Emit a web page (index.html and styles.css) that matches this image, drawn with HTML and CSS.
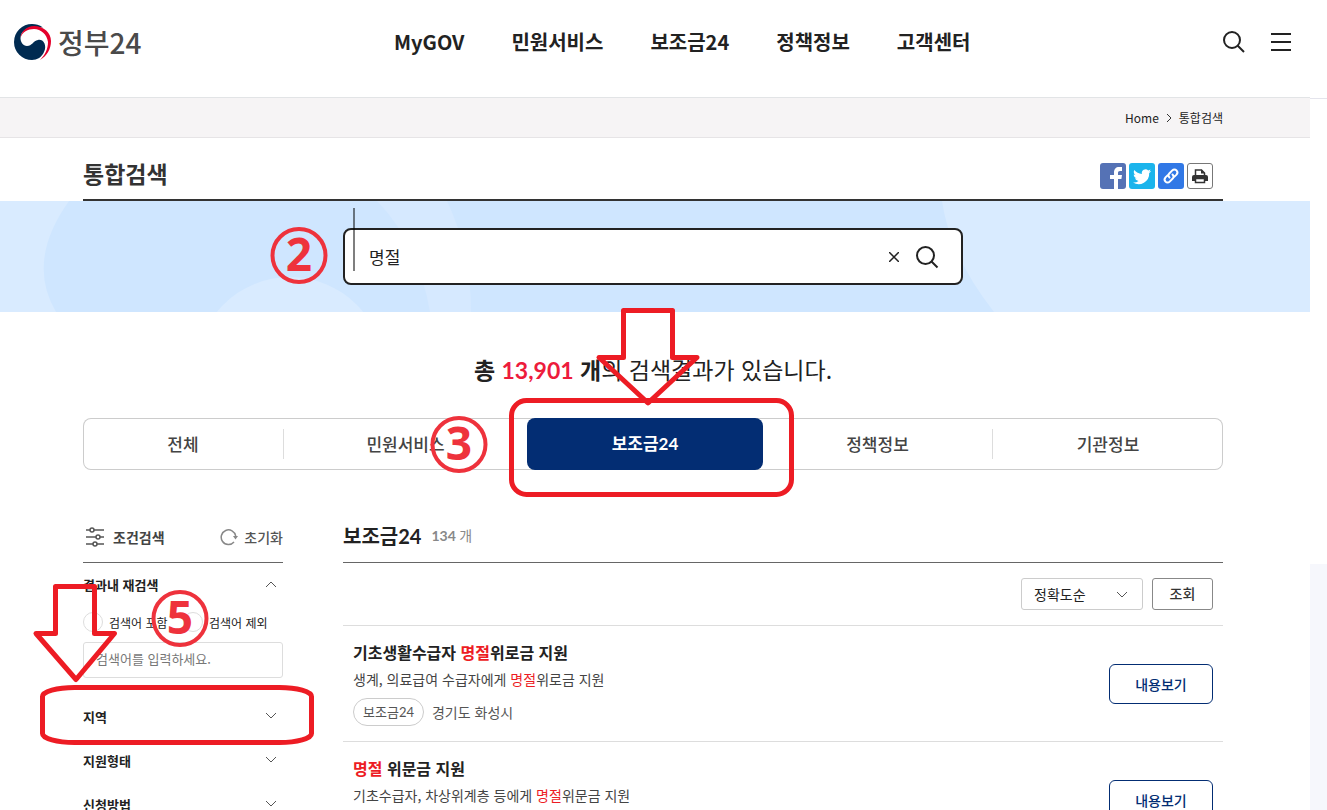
FILE: index.html
```html
<!DOCTYPE html>
<html lang="ko">

<head>
    <meta charset="UTF-8">
    <meta name="viewport" content="width=device-width, initial-scale=1.0">
    <title>통합검색 | 정부24</title>
    <link rel="stylesheet" href="styles.css">
</head>

<body>
    <header class="header">
        <a href="#" class="logo">
            <svg width="38" height="38" viewBox="0 0 38 38" aria-hidden="true">
                <path d="M29 4.500C25 1.500 22 1 18 1A18 18 0 0 0 18 37C23 37 28 34 30 29C31.500 26 31.500 23 30.500 20.500C29 17 26 16.500 24 17C19 18 18 23 13 23C9 23 6.500 19 6.500 15C7 8 13 4 20 4Z" fill="#002b51"/>
                <path d="M6.500 15C7 8 13 3.300 20 3C30 3 37 10 37 18C37 26 33 33 26 37C31 32 34 26 34 19C33 11 27 6.500 20 6C14 6 8 9 6.500 15Z" fill="#e4002b"/>
            </svg>
            <span>정부24</span>
        </a>
        <nav class="gnb">
            <a href="#">MyGOV</a>
            <a href="#">민원서비스</a>
            <a href="#">보조금24</a>
            <a href="#">정책정보</a>
            <a href="#">고객센터</a>
        </nav>
        <div class="header-tools">
            <button type="button" aria-label="검색">
                <svg width="22" height="22" viewBox="0 0 22 22" fill="none" stroke="#222" stroke-width="2"><circle cx="9" cy="9" r="8"/><path d="M14.500 14.500 21 21"/></svg>
            </button>
            <button type="button" aria-label="전체메뉴">
                <svg width="20" height="20" viewBox="0 0 20 20" stroke="#222" stroke-width="2"><path d="M0 2h20M0 10h20M0 18h20"/></svg>
            </button>
        </div>
    </header>

    <div class="layout">
        <div class="page">
            <div class="breadcrumb">
                <div class="container">
                    <a href="#">Home</a>
                    <svg width="6" height="10" viewBox="0 0 6 10" fill="none" stroke="#333"><path d="M1 1l4 4-4 4"/></svg>
                    <span>통합검색</span>
                </div>
            </div>

            <div class="container">
                <div class="title-row">
                    <h1>통합검색</h1>
                    <div class="share">
                        <a href="#" class="facebook" aria-label="페이스북">
                            <svg width="26" height="26" viewBox="0 0 26 26" fill="#fff"><path d="M14 26V16h-4v-4h4V9.500C14 6 16 4 19 4h3v4h-2c-1.500 0-2 .7-2 2v2h4l-.6 4H18v10z"/></svg>
                        </a>
                        <a href="#" class="twitter" aria-label="트위터">
                            <svg width="26" height="26" viewBox="0 0 26 26" fill="#fff"><path d="M22 8c-.6.300-1.300.5-2 .6.700-.4 1.300-1.100 1.500-2-.7.400-1.500.7-2.300.9a3.700 3.700 0 0 0-6.300 3.400C9.800 10.700 7.100 9.200 5.300 7c-1 1.700-.5 3.900 1.100 5-.6 0-1.200-.2-1.700-.5 0 1.800 1.300 3.400 3 3.700-.6.200-1.100.2-1.700.1.500 1.500 1.900 2.500 3.500 2.600A7.500 7.500 0 0 1 4 19.400a10.500 10.500 0 0 0 16.200-9.300c.7-.5 1.300-1.200 1.800-2.100z"/></svg>
                        </a>
                        <a href="#" class="link" aria-label="주소복사">
                            <svg width="26" height="26" viewBox="0 0 26 26" fill="none" stroke="#fff" stroke-width="2" stroke-linecap="round"><path d="M11.500 14.500c-1.500-1.500-1.300-3 0-4.300l2.800-2.800c1.300-1.300 3-1.300 4.200 0s1.200 2.900 0 4.200l-2.300 2.300M14.500 11.500c1.500 1.500 1.300 3 0 4.300l-2.800 2.800c-1.300 1.300-3 1.300-4.200 0s-1.200-2.900 0-4.200l2.300-2.300"/></svg>
                        </a>
                        <button type="button" class="print" aria-label="인쇄">
                            <svg width="24" height="24" viewBox="0 0 24 24"><path d="M7.500 11V6h6l3 3v2" fill="#fff" stroke="#333" stroke-width="1.500"/><path d="M13 5.500v4h4z" fill="#333"/><path d="M6 11h12a2 2 0 0 1 2 2v4H4v-4a2 2 0 0 1 2-2z" fill="#333"/><path d="M7.500 14.500h9v4h-9z" fill="#fff" stroke="#333" stroke-width="1.500"/></svg>
                        </button>
                    </div>
                </div>
            </div>

            <div class="banner">
                <svg class="banner-bg" width="1310" height="111" viewBox="0 0 1310 111" aria-hidden="true">
                    <path d="M69 0Q26 60 56 111H994Q950 55 942 0Z" fill="#cfe6ff"/>
                    <path d="M377 0Q418 42 430 111H471Q471 50 447 0Z" fill="#d6e9ff"/>
                    <circle cx="290" cy="170" r="94" fill="#d9ebff"/>
                </svg>
                <form class="search">
                    <input type="text" value="명절" aria-label="검색어">
                    <button type="reset" aria-label="지우기">
                        <svg width="10" height="10" viewBox="0 0 10 10" stroke="#222" stroke-width="1.500"><path d="M0 0l10 10M10 0L0 10"/></svg>
                    </button>
                    <button type="submit" aria-label="검색">
                        <svg width="24" height="24" viewBox="0 0 24 24" fill="none" stroke="#222" stroke-width="2"><circle cx="10.500" cy="10.500" r="8.500"/><path d="M16.500 16.500l6 6"/></svg>
                    </button>
                </form>
            </div>

            <div class="container">
                <p class="total"><strong>총 <em>13,901</em> 개</strong>의 검색결과가 있습니다.</p>

                <nav class="tabs">
                    <a href="#">전체</a>
                    <a href="#">민원서비스</a>
                    <a href="#" class="active">보조금24</a>
                    <a href="#">정책정보</a>
                    <a href="#">기관정보</a>
                </nav>

                <div class="columns">
                    <aside class="filter">
                        <div class="filter-head">
                            <svg width="20" height="20" viewBox="0 0 20 20" fill="#fff" stroke="#555" stroke-width="1.500"><path d="M1 3h18M1 10h18M1 17h18"/><circle cx="7" cy="3" r="2"/><circle cx="13" cy="10" r="2"/><circle cx="10" cy="17" r="2"/></svg>
                            <h2>조건검색</h2>
                            <button type="reset" class="reset">
                                <svg width="18" height="18" viewBox="0 0 18 18" fill="none" stroke="#888" stroke-width="1.500"><path d="M14 14A7.300 7.300 0 1 1 15.700 8"/><path d="M13 8h5l-2.500 3.500z" fill="#888" stroke="none"/></svg>
                                초기화
                            </button>
                        </div>
                        <button type="button" class="fold">결과내 재검색
                            <svg width="12" height="8" viewBox="0 0 12 8" fill="none" stroke="#555"><path d="M1 7l5-5 5 5"/></svg>
                        </button>
                        <div class="research">
                            <div class="radios">
                                <label><input type="radio" name="mode" value="in">검색어 포함</label>
                                <label><input type="radio" name="mode" value="out">검색어 제외</label>
                            </div>
                            <input type="text" placeholder="검색어를 입력하세요." aria-label="결과내 검색어">
                        </div>
                        <button type="button" class="fold">지역
                            <svg width="12" height="8" viewBox="0 0 12 8" fill="none" stroke="#555"><path d="M1 1l5 5 5-5"/></svg>
                        </button>
                        <button type="button" class="fold">지원형태
                            <svg width="12" height="8" viewBox="0 0 12 8" fill="none" stroke="#555"><path d="M1 1l5 5 5-5"/></svg>
                        </button>
                        <button type="button" class="fold">신청방법
                            <svg width="12" height="8" viewBox="0 0 12 8" fill="none" stroke="#555"><path d="M1 1l5 5 5-5"/></svg>
                        </button>
                    </aside>

                    <main class="results">
                        <div class="results-head">
                            <h2>보조금24</h2>
                            <span><b>134</b> 개</span>
                        </div>
                        <form class="sort">
                            <div class="select">
                                <select aria-label="정렬">
                                    <option>정확도순</option>
                                </select>
                                <svg width="12" height="8" viewBox="0 0 12 8" fill="none" stroke="#555"><path d="M1 1l5 5 5-5"/></svg>
                            </div>
                            <button type="submit">조회</button>
                        </form>
                        <article class="item">
                            <div class="text">
                                <h3>기초생활수급자 <mark>명절</mark>위로금 지원</h3>
                                <p>생계, 의료급여 수급자에게 <mark>명절</mark>위로금 지원</p>
                                <div class="meta"><span class="tag">보조금24</span>경기도 화성시</div>
                            </div>
                            <a href="#" class="view">내용보기</a>
                        </article>
                        <article class="item">
                            <div class="text">
                                <h3><mark>명절</mark> 위문금 지원</h3>
                                <p>기초수급자, 차상위계층 등에게 <mark>명절</mark>위문금 지원</p>
                                <div class="meta"></div>
                            </div>
                            <a href="#" class="view">내용보기</a>
                        </article>
                    </main>
                </div>
            </div>
        </div>
        <div class="gutter"><div></div></div>
    </div>

    <!-- guide marks over the page -->
    <svg class="marks" width="1327" height="810" viewBox="0 0 1327 810">
        <path d="M354 208v63" stroke="#000" stroke-opacity=".5" stroke-width="2"/>
        <g fill="none" stroke="#ed1c24" stroke-width="5" stroke-linejoin="round">
            <path d="M623.500 310.500h49v47h24.500l-49 45.500-49-45.500h24.500z"/>
            <rect x="511.500" y="400.500" width="280" height="94" rx="15"/>
            <path d="M55.500 586.500h39v47h20l-38.500 46-40-46h19.500z"/>
            <rect x="42.500" y="687.500" width="269" height="55" rx="32" ry="9"/>
        </g>
        <g class="numbers">
            <circle cx="299" cy="255.500" r="26.500"/>
            <text x="299" y="271">2</text>
            <circle cx="459" cy="444.500" r="26.500"/>
            <text x="459" y="460">3</text>
            <circle cx="180" cy="618.500" r="26.500"/>
            <text x="180" y="634">5</text>
        </g>
    </svg>
</body>

</html>
```
FILE: styles.css
```css
* {
    box-sizing: border-box;
}

body {
    position: relative;
    height: 100vh;
    margin: 0;
    overflow: hidden;
    background-color: #fff;
    color: #222;
    font-family: "Noto Sans CJK KR", sans-serif;
    font-size: 14px;
}

h1, h2, h3, p {
    margin: 0;
}

a {
    color: inherit;
    text-decoration: none;
}

svg {
    display: block;
    flex: none;
}

button {
    padding: 0;
    border: none;
    background: none;
    color: inherit;
    font: inherit;
    cursor: pointer;
}

input, select {
    font: inherit;
    color: inherit;
}

mark {
    background: none;
    color: #ed1c24;
}

.header {
    display: grid;
    grid-template-columns: 394px 1fr auto;
    align-items: center;
    height: 97px;
    padding: 0 36px 14px 0;
}

.logo {
    display: flex;
    align-items: center;
    gap: 6px;
    padding-left: 14px;
    color: #4a4a4a;
    font-size: 28px;
    font-weight: 500;
    line-height: 38px;
}

.gnb {
    display: flex;
    gap: 47px;
    font-size: 20px;
    font-weight: 700;
}

.header-tools {
    display: flex;
    align-items: center;
    gap: 26px;
}

.layout {
    display: flex;
}

.page {
    flex: 1;
}

.gutter {
    display: flex;
    flex-direction: column;
    width: 17px;
    margin-top: 1px;
    border-top: 1px solid #e4e4ec;
}

.gutter div {
    flex: 1;
    margin-top: 465px;
    background-color: #f6f7fc;
}

.container {
    width: calc(100% - 170px);
    max-width: 1140px;
    margin: 0 87px 0 83px;
}

.breadcrumb {
    border-top: 1px solid #e2e4e6;
    border-bottom: 1px solid #e6e4e6;
    background-color: #f6f4f5;
}

.breadcrumb .container {
    display: flex;
    justify-content: flex-end;
    align-items: center;
    gap: 7px;
    height: 39px;
    font-size: 12px;
}

.title-row {
    display: flex;
    justify-content: space-between;
    align-items: center;
    height: 63px;
    padding-top: 14px;
    border-bottom: 2px solid #333;
}

h1 {
    height: 47px;
    color: #333;
    font-size: 23px;
    line-height: 42px;
}

.share {
    display: flex;
    gap: 3px;
    padding-right: 10px;
}

.share a, .share button {
    width: 26px;
    height: 26px;
    border-radius: 3px;
}

.facebook {
    background-color: #5572b5;
}

.twitter {
    background-color: #1bb4ec;
}

.link {
    background-color: #3178e6;
}

.share .print {
    border: 1px solid #777;
}

.banner {
    position: relative;
    display: flex;
    height: 111px;
    padding: 27px 0 0 343px;
    overflow: hidden;
    background-color: #d9ebff;
}

.banner-bg {
    position: absolute;
    top: 0;
    left: 0;
}

.search {
    position: relative;
    display: flex;
    align-items: center;
    gap: 16px;
    width: 620px;
    height: 57px;
    padding: 0 22px 0 24px;
    border: 2px solid #222;
    border-radius: 8px;
    background-color: #fff;
}

.search input {
    flex: 1;
    min-width: 0;
    padding: 0;
    border: none;
    outline: none;
    font-size: 17px;
}

.total {
    margin-top: 39px;
    font-size: 23px;
    line-height: 36px;
    text-align: center;
}

.total em {
    color: #ed1c3c;
    font-family: Lato, "Noto Sans CJK KR", sans-serif;
    font-style: normal;
}

.tabs {
    display: grid;
    grid-template-columns: 201fr 243fr 236fr 230fr 230fr;
    align-items: center;
    margin-top: 30px;
    box-shadow: inset 0 0 0 1px #ccc;
    border-radius: 8px;
    color: #444;
    font-size: 17px;
    font-weight: 500;
    line-height: 30px;
    text-align: center;
}

.tabs a {
    border-right: 1px solid #ddd;
}

.tabs a:nth-child(2), .tabs a:last-child {
    border-right: none;
}

.tabs .active {
    border: none;
    border-radius: 8px;
    background-color: #032d73;
    color: #fff;
    font-family: Lato, "Noto Sans CJK KR", sans-serif;
    font-weight: 700;
    line-height: 52px;
}

.columns {
    display: grid;
    grid-template-columns: 200px 1fr;
    gap: 60px;
    margin-top: 42px;
}

.filter-head, .results-head {
    display: flex;
    align-items: center;
    height: 51px;
    border-bottom: 1px solid #666;
}

.filter-head {
    padding-left: 2px;
}

.filter-head h2 {
    margin-left: 8px;
    color: #444;
    font-size: 14px;
}

.reset {
    display: flex;
    align-items: center;
    gap: 6px;
    margin-left: auto;
    color: #555;
    font-weight: 500;
}

.fold {
    display: flex;
    justify-content: space-between;
    align-items: center;
    width: 100%;
    height: 44px;
    padding-right: 6px;
    padding-bottom: 2px;
    font-size: 13px;
    font-weight: 700;
}

.research {
    padding: 5px 0 17px;
}

.radios {
    display: grid;
    grid-template-columns: 1fr 1fr;
    font-size: 12px;
    white-space: nowrap;
}

.radios label {
    display: flex;
    align-items: center;
    gap: 6px;
}

.radios input {
    width: 20px;
    height: 20px;
    margin: 0;
    border: 1px solid #ddd;
    border-radius: 50%;
    appearance: none;
}

.research > input {
    width: 100%;
    height: 36px;
    margin-top: 10px;
    padding: 0 12px 3px;
    border: 1px solid #ddd;
    border-radius: 3px;
    font-size: 13px;
}

::placeholder {
    color: #777;
}

.results-head {
    gap: 10px;
    padding-bottom: 4px;
    color: #888;
    font-family: Lato, "Noto Sans CJK KR", sans-serif;
}

.results-head h2 {
    color: #222;
    font-size: 20px;
}

.sort {
    display: flex;
    justify-content: flex-end;
    gap: 9px;
    padding: 15px 10px;
}

.select {
    position: relative;
}

.select svg {
    position: absolute;
    top: 13px;
    right: 15px;
    pointer-events: none;
}

.sort select {
    width: 122px;
    height: 32px;
    padding: 0 12px;
    border: 1px solid #ccc;
    border-radius: 3px;
    background-color: #fff;
    appearance: none;
}

.sort button {
    width: 61px;
    height: 32px;
    padding-bottom: 2px;
    border: 1px solid #888;
    border-radius: 3px;
    color: #333;
    font-weight: 500;
}

.item {
    display: flex;
    justify-content: space-between;
    align-items: center;
    height: 116px;
    padding: 0 10px;
    border-top: 1px solid #ddd;
}

.text {
    padding-bottom: 2px;
}

.item h3 {
    font-size: 16px;
    line-height: 24px;
}

.item p {
    margin-top: 3px;
    color: #444;
    line-height: 24px;
}

.meta {
    display: flex;
    align-items: center;
    gap: 8px;
    height: 28px;
    margin-top: 7px;
    color: #555;
    line-height: 24px;
}

.tag {
    padding: 0 9px;
    border: 1px solid #ccc;
    border-radius: 14px;
    font-family: Lato, "Noto Sans CJK KR", sans-serif;
    font-size: 13px;
    line-height: 26px;
}

.view {
    width: 104px;
    border: 1px solid #032d73;
    border-radius: 6px;
    color: #032d73;
    font-weight: 500;
    line-height: 38px;
    text-align: center;
}

.marks {
    position: absolute;
    top: 0;
    left: 0;
    pointer-events: none;
}

.numbers {
    fill: #ee323c;
    font-family: "Open Sans", sans-serif;
    font-size: 46px;
    font-weight: 700;
    text-anchor: middle;
}

.numbers circle {
    fill: none;
    stroke: #ee323c;
    stroke-width: 4px;
}
```
